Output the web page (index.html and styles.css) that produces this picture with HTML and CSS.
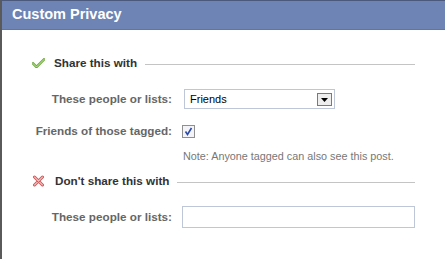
FILE: index.html
```html
<!DOCTYPE html>
<html>
<head>
<meta charset="utf-8">
<link rel="stylesheet" href="styles.css">
</head>
<body>
<div class="dialog">
  <div class="header">Custom Privacy</div>
  <div class="content">
    <div class="section-head">
      <svg class="icon" width="13" height="10" viewBox="0 0 13 10">
        <path d="M1 5.5 L4.5 9 L12 1.5" fill="none" stroke="#6aa83a" stroke-width="2.6" stroke-linecap="square"/>
        <path d="M1 5.5 L4.5 9 L12 1.5" fill="none" stroke="#c2e89a" stroke-width="1" stroke-linecap="square"/>
      </svg>
      <span class="section-title">Share this with</span>
      <span class="rule"></span>
    </div>
    <div class="form-row first">
      <span class="label">These people or lists:</span>
      <div class="select">
        <span class="select-text">Friends</span>
        <span class="select-btn"><svg width="7" height="4" viewBox="0 0 7 4"><path d="M0 0 H7 L3.5 4 Z" fill="#000"/></svg></span>
      </div>
    </div>
    <div class="form-row second">
      <span class="label">Friends of those tagged:</span>
      <span class="checkbox">
        <svg width="9" height="9" viewBox="0 0 9 9"><path d="M1.5 4.5 L3.5 7.5 L7.5 1" fill="none" stroke="#2a4aa8" stroke-width="1.6"/></svg>
      </span>
    </div>
    <div class="note">Note: Anyone tagged can also see this post.</div>
    <div class="section-head second-head">
      <svg class="icon x" width="12" height="12" viewBox="0 0 12 12">
        <path d="M2 2 L10 10 M10 2 L2 10" fill="none" stroke="#cc5555" stroke-width="3" stroke-linecap="round"/>
        <path d="M2 2 L10 10 M10 2 L2 10" fill="none" stroke="#f4b8b8" stroke-width="1.1" stroke-linecap="round"/>
      </svg>
      <span class="section-title">Don't share this with</span>
      <span class="rule"></span>
    </div>
    <div class="form-row third">
      <span class="label">These people or lists:</span>
      <span class="textbox"></span>
    </div>
  </div>
</div>
</body>
</html>
```

FILE: styles.css
```css
html, body {
  margin: 0;
  padding: 0;
  background: #fff;
}
.dialog {
  width: 445px;
  height: 259px;
  box-sizing: border-box;
  border-left: 2px solid #5a5a5a;
  border-top: 1px solid #4b5a7c;
  font-family: "Liberation Sans", Arial, sans-serif;
  font-size: 11px;
}
.header {
  height: 28px;
  background: #6d84b4;
  color: #fff;
  font-size: 14.5px;
  font-weight: bold;
  line-height: 26px;
  padding-left: 10px;
  border-bottom: 1px solid #5f75a4;
}
.content {
  padding: 26px 30px 0 30px;
}
.section-head {
  display: flex;
  align-items: center;
  height: 14px;
}
.icon {
  width: 13px;
  margin-right: 9px;
}
.icon.x {
  margin-right: 10px;
}
.section-title {
  font-weight: bold;
  color: #333;
  font-size: 11.7px;
  line-height: 14px;
}
.rule {
  flex: 1;
  height: 1px;
  background: #c4c4c4;
  margin-left: 8px;
  margin-top: 2px;
}
.form-row {
  display: grid;
  grid-template-columns: 140px auto;
  column-gap: 10px;
  align-items: center;
}
.form-row.first { margin-top: 19px; }
.form-row.second { margin-top: 15px; }
.form-row.third { margin-top: 18px; }
.label {
  text-align: right;
  font-weight: bold;
  font-size: 11.7px;
  color: #666;
  line-height: 14px;
}
.select {
  width: 151px;
  height: 20px;
  box-sizing: border-box;
  border: 1px solid #bdc7d8;
  margin-left: 2px;
  display: flex;
  align-items: center;
  justify-content: space-between;
  padding: 0 2px 0 5px;
  color: #000;
}
.select-btn {
  width: 15px;
  height: 13px;
  box-sizing: border-box;
  border: 1px solid #7a7a7a;
  background: #eee;
  display: flex;
  align-items: center;
  justify-content: center;
  padding-top: 2px;
}
.select-btn svg { display: block; }
.checkbox {
  width: 13px;
  height: 13px;
  box-sizing: border-box;
  border: 1px solid #8f8f8f;
  background: #f4f4f8;
  display: flex;
  align-items: center;
  justify-content: center;
}
.checkbox svg { display: block; }
.note {
  margin-top: 11px;
  margin-left: 151px;
  color: #777;
  font-size: 10.8px;
  line-height: 14px;
}
.second-head { margin-top: 11px; }
.textbox {
  width: 233px;
  height: 22px;
  box-sizing: border-box;
  border: 1px solid #bdc7d8;
  display: block;
}
```
